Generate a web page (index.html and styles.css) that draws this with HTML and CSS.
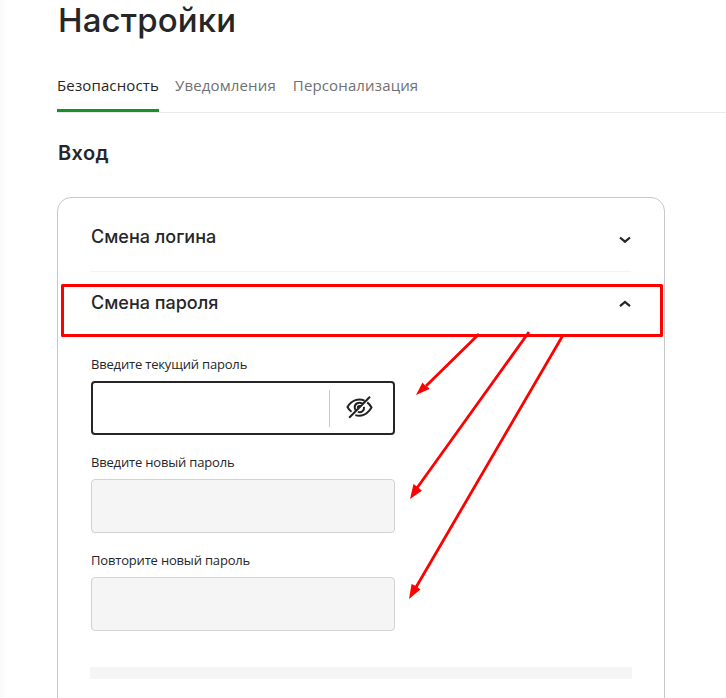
FILE: index.html
```html
<!DOCTYPE html>
<html lang="ru">
<head>
<meta charset="utf-8">
<title>Настройки</title>
<link rel="stylesheet" href="styles.css">
</head>
<body>
<main class="page">
  <h1 class="title"><span>Настройки</span></h1>
  <nav class="tabs">
    <a class="tab tab-active">Безопасность</a>
    <a class="tab tab-notify">Уведомления</a>
    <a class="tab tab-personal">Персонализация</a>
  </nav>
  <h2 class="section-title"><span>Вход</span></h2>
  <section class="card">
    <div class="row row-login">
      <h3 class="row-title login-title">Смена логина</h3>
      <svg class="chevron" width="14" height="10" viewBox="0 0 14 10"><path d="M3 2.500 8 6.700l5-4.200"/></svg>
    </div>
    <div class="row row-password">
      <h3 class="row-title password-title">Смена пароля</h3>
      <svg class="chevron" width="14" height="10" viewBox="0 0 14 10"><path d="M3 7.200 8 3l5 4.200"/></svg>
    </div>
    <form class="form">
      <div class="field">
        <label class="label label-current">Введите текущий пароль</label>
        <div class="input input-focused">
          <div class="eye">
            <svg width="30" height="26" viewBox="0 0 30 26">
              <path d="M20.500 5.600C15 3 7.500 4.800 3.500 12c1 2 2.300 3.600 4 4.800M11.300 20.100c6 1.700 12.300-.8 16.200-7.600-1.200-2.300-2.600-3.900-4.300-5.100M18.500 8.800c-3.600-2.400-7.800-.2-7.800 3.500 0 1 .3 2 .9 2.700M13.800 16.900c3.500 1.200 6.800-1.200 6.200-5M16 11c-1.400-.3-2.300.6-2.100 1.900M5.200 22.700 26 1.800"/>
            </svg>
          </div>
        </div>
      </div>
      <div class="field">
        <label class="label label-new">Введите новый пароль</label>
        <div class="input"></div>
      </div>
      <div class="field">
        <label class="label label-repeat">Повторите новый пароль</label>
        <div class="input"></div>
      </div>
      <div class="notice"></div>
    </form>
  </section>
</main>
<svg class="marks" width="726" height="698" viewBox="0 0 726 698">
  <rect x="62.5" y="285.5" width="599" height="50"/>
  <path class="shaft" d="M479 334 426 386M529 332 417 488M562.500 336 415 589"/>
  <path class="head" d="M416 395l6.500-12.500 2.200 2.500 4 2.700.8 1.200zM410 499l3.500-15 2.800 2 3 2.600 2.600 2.200zM409 599l2.600-15 3.200 1.500 3.400 2.200 2.200 1.700z"/>
</svg>
</body>
</html>
```
FILE: styles.css
```css
* {
  box-sizing: border-box;
}

body {
  margin: 0;
  height: 698px;
  overflow: hidden;
  position: relative;
  background: linear-gradient(90deg, #fafafa, #fff 8px);
  color: #262628;
  font-family: "Open Sans", "Noto Sans", sans-serif;
}

h1, h2, h3 {
  margin: 0;
  font-family: Inter, "Noto Sans", sans-serif;
}

.page {
  padding-left: 57px;
}

.title {
  height: 64px;
  padding-left: 1px;
  font-size: 33px;
  line-height: 40px;
  font-weight: 550;
  letter-spacing: 0.15px;
}

.tabs {
  display: flex;
  gap: 16px;
  height: 49px;
  border-bottom: 1px solid #ebebeb;
}

.tab {
  height: 48px;
  font-size: 15px;
  line-height: 43px;
  letter-spacing: 0.14px;
  color: #707072;
  white-space: nowrap;
}

.tab-active {
  width: 102px;
  color: #262628;
  border-bottom: 3px solid #199030;
  border-radius: 2px 2px 0 0;
}

.tab-personal {
  margin-left: 1px;
}

.section-title {
  padding: 26px 0 0 1px;
  height: 84px;
  font-size: 20px;
  line-height: 28px;
  font-weight: 600;
  letter-spacing: 0.4px;
}

.card {
  width: 608px;
  height: 530px;
  padding: 0 33px;
  border: 1px solid #c8c8ca;
  border-radius: 14px;
  background: #fff;
}

.row {
  display: flex;
  justify-content: space-between;
}

.row-login {
  height: 74px;
  padding-top: 25px;
  border-bottom: 1px solid #f3f3f3;
}

.row-password {
  height: 86px;
  padding-top: 17px;
}

.row-title {
  font-size: 18px;
  line-height: 28px;
  font-weight: 500;
}

.chevron {
  margin-top: 12px;
}

.row-password .chevron {
  margin-top: 10px;
}

.chevron path {
  fill: none;
  stroke: #262628;
  stroke-width: 2.2;
}

.field {
  height: 98px;
}

.label {
  display: block;
  width: max-content;
  height: 23px;
  font-size: 13px;
  line-height: 12px;
  letter-spacing: -0.18px;
}

.input {
  width: 304px;
  height: 54px;
  border: 1px solid #d2d2d4;
  border-radius: 4px;
  background: #f5f5f5;
}

.input-focused {
  display: flex;
  justify-content: flex-end;
  align-items: center;
  border: 2px solid #262628;
  background: #fff;
}

.eye {
  display: flex;
  align-items: center;
  width: 64px;
  height: 37px;
  padding-left: 14px;
  border-left: 1px solid #c8c8ca;
}

.eye path {
  fill: none;
  stroke: #222;
  stroke-width: 2;
}

.notice {
  height: 12px;
  margin: 15px -1px 0;
  background: #f5f5f5;
}

.marks {
  position: absolute;
  left: 0;
  top: 0;
}

.marks rect {
  fill: none;
  stroke: #f00;
  stroke-width: 3;
  stroke-linejoin: round;
}

.shaft {
  fill: none;
  stroke: #f00;
  stroke-width: 2.8;
}

.head {
  fill: #f00;
}
```
